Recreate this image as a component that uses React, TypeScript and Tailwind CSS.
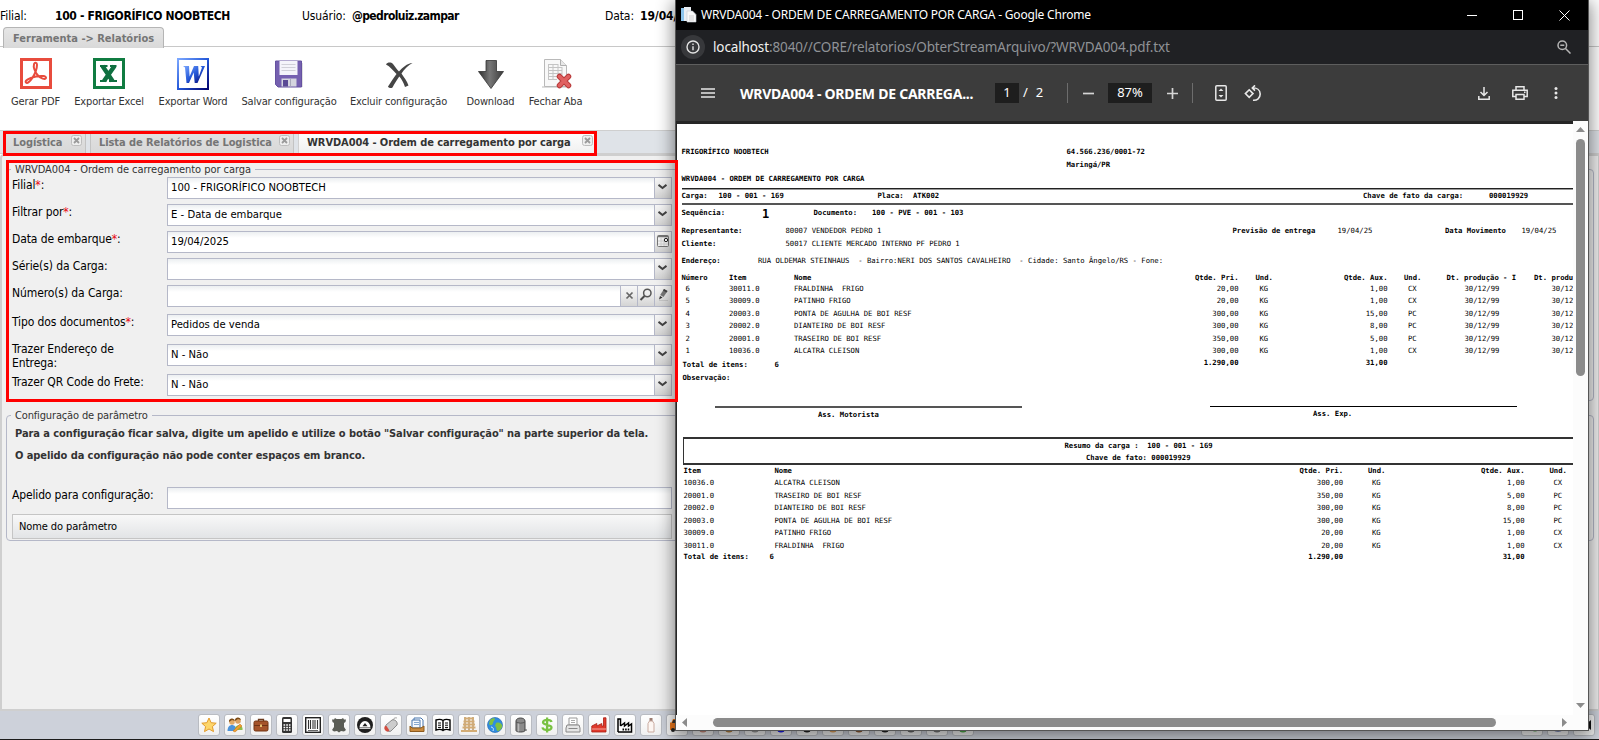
import type { ReactNode } from "react";

const field = "border border-[#b5b8c8] bg-white bg-[linear-gradient(#eceff1,#ffffff_6px)]";

/* ---------- toolbar icons ---------- */

const PdfIcon = () => (
  <svg width="32" height="32" viewBox="0 0 32 32" fill="none">
    <rect x="1.5" y="1.5" width="29" height="28" fill="#fff" stroke="#e84c3d" strokeWidth="3" />
    <path d="M6 24.5c-2-2 3.500-4.600 10-6 5.500-1.200 10.500-.6 10 1.600-.6 2.100-5.500.3-8.500-3.100-2.600-3-4.400-8-3.500-10.800.7-2 3-1.800 3 .6 0 4-2.400 9.800-5 13.700-2.200 3.300-4.700 5.200-6 4z" stroke="#e84c3d" strokeWidth="2" />
  </svg>
);

const ExcelIcon = () => (
  <svg width="32" height="32" viewBox="0 0 32 32">
    <rect x="1.500" y="1.500" width="29" height="28" fill="#fff" stroke="#107c41" strokeWidth="3" />
    <path d="M9.500 8l10 15M21.500 8L11 23" stroke="#0f7040" strokeWidth="4.400" />
    <path d="M7 8h7.500M17 8h6.500M7 23h6.500M16 23h8" stroke="#0f7040" strokeWidth="2" />
  </svg>
);

const WordIcon = () => (
  <svg width="32" height="33" viewBox="0 0 32 33">
    <defs>
      <linearGradient id="wg" x1="0" y1="0" x2="1" y2="1">
        <stop offset="0" stopColor="#7ba7ff" />
        <stop offset=".5" stopColor="#2458d8" />
        <stop offset="1" stopColor="#02036e" />
      </linearGradient>
    </defs>
    <rect x="1" y="1" width="30" height="30" fill="#fff" stroke="url(#wg)" strokeWidth="2" />
    <path d="M6 8h6l.6 10.500L17 8h4.200l.6 10.500L25 9.500 23.500 8H28l-7.500 17h-2.800l-1-10.500L12 25H9.500L8 9.500z" fill="url(#wg)" />
  </svg>
);

const FloppyIcon = () => (
  <svg width="30" height="32" viewBox="0 0 30 32">
    <path d="M3 5h26v24H3z" fill="#000" opacity=".12" />
    <path d="M1.500 3h26v26H4l-2.500-2.500z" fill="#7560b0" stroke="#6552a0" />
    <path d="M5.500 3h18v14h-18z" fill="#f4f4fa" />
    <path d="M7.500 6.500h14M7.500 9.500h14M7.500 12.500h14" stroke="#d0d0d8" />
    <path d="M7.500 20.500h15v8h-15z" fill="#d5d5df" />
    <path d="M9 22h5v6.500H9z" fill="#5b4a95" />
    <path d="M16 21h1v7.500h-1z" fill="#a9a9bb" />
  </svg>
);

const DeleteIcon = () => (
  <svg width="30" height="32" viewBox="0 0 30 32">
    <path d="M2 6.500c1.500-2.500 5-2.500 7-.5 2.500 3 4 5.500 6 7.500 3.500-4 8-8 13.500-8.500-4.500 2.500-8 6-11 10.500 2.500 4 5.500 7.500 7 12l-3.500 1.500c-1.500-4.500-3.500-8-5.700-10.500-3 4-4.800 7.500-6.800 11-1.500 1-4 .5-4.500-1 3-4.500 5.500-8.500 8.500-12.500C9 12.500 6 8.500 2 6.500z" fill="#454545" />
  </svg>
);

const DownIcon = () => (
  <svg width="28" height="32" viewBox="0 0 28 32">
    <defs>
      <linearGradient id="dg" x1="0" y1="0" x2="1" y2="0">
        <stop offset="0" stopColor="#2e2e2e" />
        <stop offset=".45" stopColor="#777" />
        <stop offset="1" stopColor="#3a3a3a" />
      </linearGradient>
    </defs>
    <path d="M9 2.500h10.500v11h7L14 30.500 1.500 13.500H9z" fill="url(#dg)" stroke="#333" strokeWidth=".8" />
  </svg>
);

const CloseSheetIcon = () => (
  <svg width="32" height="32" viewBox="0 0 32 32">
    <path d="M2 29h24" stroke="#ddd" strokeWidth="2" />
    <path d="M4.500 1.500h16l6 6v21h-22z" fill="#f8f8f8" stroke="#b9b9b9" />
    <path d="M20.500 1.500v6h6" fill="#e8e8e8" stroke="#b0b0b0" />
    <path d="M8 6.500h10M8 9.500h14M8 12.500h14M8 15.500h14M8 18.500h10M8 21.500h9M8.500 6v16M13 6v16M18 6v12M22 9v8" stroke="#c4c4c4" />
    <path d="M19.500 18.500l9 9M28.500 18.500l-9 9" stroke="#b93a3a" strokeWidth="5.500" strokeLinecap="round" />
    <path d="M19.500 18.500l9 9M28.500 18.500l-9 9" stroke="#e06060" strokeWidth="3.500" strokeLinecap="round" />
  </svg>
);

const tools = [
  { label: "Gerar PDF", w: "w-[63px]", icon: <PdfIcon /> },
  { label: "Exportar Excel", w: "w-[84px]", icon: <ExcelIcon /> },
  { label: "Exportar Word", w: "w-[84px]", icon: <WordIcon /> },
  { label: "Salvar configuração", w: "w-[108px]", icon: <FloppyIcon /> },
  { label: "Excluir configuração", w: "w-[111px]", icon: <DeleteIcon /> },
  { label: "Download", w: "w-[73px]", icon: <DownIcon /> },
  { label: "Fechar Aba", w: "w-[57px]", icon: <CloseSheetIcon /> },
];

/* ---------- tabs ---------- */

const TabClose = () => (
  <svg width="11" height="11" viewBox="0 0 11 11" className="mt-[4px] shrink-0">
    <rect x=".5" y=".5" width="10" height="10" rx="2" fill="#eee" stroke="#bdbdbd" />
    <path d="M3 3l5 5M8 3L3 8" stroke="#9a9a9a" strokeWidth="1.800" />
  </svg>
);

const Tab = ({ label, active, className }: { label: string; active?: boolean; className: string }) => (
  <div
    className={`flex h-[23px] justify-between rounded-t-[3px] border border-b-0 pr-[3px] pl-[8px] text-[11px] font-bold leading-[24px] tracking-[-0.08px] whitespace-nowrap ${
      active ? "border-[#d0d0d0] bg-[linear-gradient(#ffffff,#f0f0f0)] text-[#333]" : "border-[#c3c3c3] bg-[linear-gradient(#e2e2e2,#d8d8d8)] text-[#757575]"
    } ${className}`}
  >
    <span>{label}</span>
    <TabClose />
  </div>
);

/* ---------- form ---------- */

const Trigger = ({ children }: { children: ReactNode }) => (
  <div className="flex h-full w-[17px] shrink-0 items-center justify-center border-l border-[#b5b8c8] bg-[linear-gradient(#f7f7f7,#e9e9e9_50%,#d4d4d4)]">{children}</div>
);

const Chevron = () => (
  <svg width="9" height="6" viewBox="0 0 9 6" className="mr-px mb-[2px]">
    <path d="M.5 .8l4 3.200L8.500 .8" fill="none" stroke="#444" strokeWidth="2" />
  </svg>
);

const CalendarIcon = () => (
  <svg width="12" height="12" viewBox="0 0 12 12" className="mb-[2px]">
    <rect x=".5" y=".5" width="11" height="11" rx="1" fill="#f5f5f5" stroke="#777" />
    <path d="M1 1.500h10" stroke="#777" strokeWidth="1.500" />
    <path d="M4 3v8M7 6v5M1 6h6M1 9h10" stroke="#ccc" strokeWidth=".8" />
    <circle cx="9" cy="5" r="1.700" fill="#fff" stroke="#222" />
  </svg>
);

const ClearIcon = () => (
  <svg width="9" height="9" viewBox="0 0 9 9" className="mb-[2px]">
    <path d="M1.500 1.500l6 6M7.500 1.500l-6 6" stroke="#666" strokeWidth="1.700" />
  </svg>
);

const SearchIcon = () => (
  <svg width="14" height="14" viewBox="0 0 14 14" className="mb-[2px]">
    <circle cx="8.300" cy="5" r="3.700" fill="none" stroke="#555" strokeWidth="1.500" />
    <path d="M5.500 8L1.500 12" stroke="#4a4a4a" strokeWidth="2" />
  </svg>
);

const PencilIcon = () => (
  <svg width="14" height="14" viewBox="0 0 14 14" className="mb-[2px]">
    <path d="M8 1l3.500 2-4 6-3.300-2z" fill="#777" />
    <path d="M8 1l3.500 2-1 1.500L7 2.500z" fill="#444" />
    <path d="M4 8l2.500 1.500L3 11.500z" fill="#333" />
    <path d="M3 12.500h9" stroke="#c8c8c8" />
  </svg>
);

type FormRow = { label: string; req?: boolean; value?: string; h: string; lift?: boolean; icons?: ReactNode[] };
const rows: FormRow[] = [
  { label: "Filial", req: true, value: "100 - FRIGORÍFICO NOOBTECH", h: "h-[27px]" },
  { label: "Filtrar por", req: true, value: "E - Data de embarque", h: "h-[27px]" },
  { label: "Data de embarque", req: true, value: "19/04/2025", h: "h-[27px]", icons: [<CalendarIcon />] },
  { label: "Série(s) da Carga", h: "h-[27px]" },
  { label: "Número(s) da Carga", h: "h-[29px]", icons: [<ClearIcon />, <SearchIcon />, <PencilIcon />] },
  { label: "Tipo dos documentos", req: true, value: "Pedidos de venda", h: "h-[30px]" },
  { label: "Trazer Endereço de Entrega", value: "N - Não", h: "h-[30px]", lift: true },
  { label: "Trazer QR Code do Frete", value: "N - Não", h: "h-[27px]" },
];

/* ---------- taskbar ---------- */

const dockIcons: ReactNode[] = [
  <path d="M8 1l2.100 4.700 5.100.5-3.800 3.400 1.100 5L8 12l-4.500 2.600 1.100-5L.8 6.200l5.100-.5z" fill="#fdd66b" stroke="#e29a2b" />,
  <><circle cx="5" cy="5" r="2.800" fill="#e2ab69" /><circle cx="11" cy="4" r="2.800" fill="#d9a062" /><path d="M2 5a3 3 0 016-1L5 3zM8 4a3 3 0 016-1l-3-1z" fill="#7b4a16" /><path d="M.5 14c0-4 2-6 4.500-6s4.500 2 4.500 6z" fill="#4d93d9" /><path d="M8 11c1-3 6-5 7.500 0v2H9z" fill="#8bbf4d" /><path d="M6 14l7-7 2 2-7 6z" fill="#f0a030" stroke="#c46f10" strokeWidth=".5" /></>,
  <><path d="M5.500 4V2.500h5V4" fill="none" stroke="#6b3a1c" strokeWidth="1.300" /><rect x="1" y="4" width="14" height="10" rx="1.500" fill="#a4532a" stroke="#733413" /><path d="M1 8.500h14" stroke="#6e3315" /><rect x="7" y="7.500" width="2" height="2.500" fill="#e6c070" /></>,
  <><rect x="3" y="0" width="10" height="16" rx="1.500" fill="#333" /><rect x="4.500" y="2" width="7" height="3" fill="#fff" /><path d="M4.500 8h7M4.500 10.500h7M4.500 13h7" stroke="#fff" strokeWidth="1.500" strokeDasharray="1.700 1" /></>,
  <><rect x=".7" y=".7" width="14.600" height="14.600" fill="#fff" stroke="#222" strokeWidth="1.400" /><path d="M3.500 3v9M5.500 3v9M8 3v9M10 3v9M12.500 3v9" stroke="#333" strokeWidth="1.100" /><path d="M3 13.500h10" stroke="#666" /></>,
  <path d="M4 1l1.500 1h5L12 1l1 1.500h2L14.500 5 13 6v4l2 3-2 1.500-3-.5-2 1.500L6 14l-3 .5L1 13l2-3V6L1.500 5 1 2.500h2z" fill="#5a5c55" />,
  <><circle cx="8" cy="8" r="8" fill="#1f1f1f" /><path d="M2.500 10.500a5.500 6.500 0 0111 0z" fill="#fff" /><path d="M5.500 9.300L8 6l2.500 3.300z" fill="#1f1f1f" /><path d="M2.500 11.500h11" stroke="#fff" strokeWidth=".8" /></>,
  <><path d="M10 3c1-3 4-2 4-2" fill="none" stroke="#999" /><path d="M3 8l6-5c3-1 6 2 5 5l-6 6c-3 2-7-2-5-6z" fill="#ccc" stroke="#8a8a8a" /><path d="M2 9c-2 3 1 6 3 5.500l1.500-1L3.500 9z" fill="#d34d3f" /></>,
  <><path d="M5 1h7l2 2v8H5z" fill="#fff" stroke="#4675ad" /><path d="M3 3h8v8H3z" fill="#f5f9ff" stroke="#4675ad" /><path d="M5 5.500h5M5 7.500h5" stroke="#86a8d0" /><path d="M1 9l2 2h9l3-2v5.500H1z" fill="#c98a3e" stroke="#8d5a1d" /></>,
  <><path d="M1 3c3-1 5-1 7 .5C10 2 12 2 15 3v10c-3-1-5-1-7 .5C6 12 4 12 1 13zM8 3.500v10" fill="#fff" stroke="#000" strokeWidth="1.400" /><path d="M3 6h3M3 8.200h3M3 10.400h3M10 6h3M10 8.200h3M10 10.400h3" stroke="#000" /></>,
  <><path d="M4 0v14M8 0v14M12 0v14" stroke="#a77f48" strokeWidth="1.200" /><path d="M3 1.500h10M2.500 4.500h11M2 7.500h12M1.500 10.500h13M0 14h16" stroke="#d3ac74" strokeWidth="1.900" /></>,
  <><circle cx="8" cy="8" r="7.500" fill="#2f8de0" stroke="#2b6db0" strokeWidth=".7" /><path d="M3 3c2-2 5-2 5-1s-2 2-2 4-3 3-4 1zM9 6c3-1 5 0 6 2s-2 6-4 6-1-4-3-5z" fill="#7fc142" /><path d="M4 10c2 0 3 2 2 4" stroke="#d6ecfb" fill="none" /></>,
  <><path d="M3 4c0-4 9-4 9 0v9.500c0 2-9 2-9 0z" fill="#8b8b8b" stroke="#444" /><path d="M3 5c2 1.500 7 1.500 9 0" fill="none" stroke="#555" /><path d="M5.500 6.500v8" stroke="#b9b9b9" strokeWidth="1.500" /><path d="M11 13h3" stroke="#555" /></>,
  <path d="M12.500 5C12 2.500 4 2 4 5.200c0 3.600 8.500 1.600 8.500 5.400 0 3.400-8.500 3.200-9-.2M8.100 .5v15" fill="none" stroke="#79c143" strokeWidth="2.300" />,
  <><path d="M4 1h8v7H4z" fill="#fff" stroke="#999" /><path d="M6 3.500h4M6 5.500h4" stroke="#aaa" /><path d="M2 8h12l1 3v4H1v-4z" fill="#e5e5e5" stroke="#888" /><path d="M3.500 11.500h9" stroke="#888" /></>,
  <><path d="M.8 15V9l5-2.500V9l5-2.500V9h1.700V.8H15V15z" fill="#e03a2c" stroke="#a81d13" strokeWidth=".8" /><path d="M1 12h14" stroke="#f5a79f" strokeWidth="1" /></>,
  <><path d="M1 15V2h2.500v7M3.500 9l4-3v3l4-3v3l3-2v8H1" fill="#fff" stroke="#000" strokeWidth="1.500" /><path d="M5.500 12.500h7" stroke="#000" strokeDasharray="1.600 1" strokeWidth="1.800" /></>,
  <><path d="M6.500 1h3v3h-3z" fill="#9b7d72" /><path d="M6.500 4L5 6.500V15h6V6.500L9.500 4z" fill="#fdf6f2" stroke="#c9aba0" /></>,
  <><path d="M1 5.500h1.500L4 2h5v11H1z" fill="#f07a1d" /><path d="M3 6l1.300-3H7v3z" fill="#333" /><circle cx="4" cy="13" r="2" fill="#222" /></>,
];

const lowDock = ["#c98b7a", "#b5813f", "#999", "#1a1aee", "#222", "#e4a35a", "#8d5a33", "#222", "#666", "#777", "#4fae4a"];

const DockButton = ({ children }: { children?: ReactNode }) => (
  <div className="flex h-[22px] w-[22px] shrink-0 items-center justify-center rounded-[3px] border border-[#b9bcc2] bg-[linear-gradient(#ffffff,#f0f0f0)]">
    <svg width="16" height="16" viewBox="0 0 16 16">{children}</svg>
  </div>
);

/* ---------- report ---------- */

const infoGrid = "grid whitespace-pre leading-[12px]";
const itemsGrid = "grid grid-cols-[47.500px_65px_350px_94.500px_17px_132px_16.500px_42.500px_87.500px_60px] whitespace-pre";
const sumGrid = "grid grid-cols-[91px_478px_90.500px_25px_156.500px_25px_60px] whitespace-pre";

const items = [
  ["6", "30011.0", "FRALDINHA  FRIGO", "20,00", "1,00", "CX"],
  ["5", "30009.0", "PATINHO FRIGO", "20,00", "1,00", "CX"],
  ["4", "20003.0", "PONTA DE AGULHA DE BOI RESF", "300,00", "15,00", "PC"],
  ["3", "20002.0", "DIANTEIRO DE BOI RESF", "300,00", "8,00", "PC"],
  ["2", "20001.0", "TRASEIRO DE BOI RESF", "350,00", "5,00", "PC"],
  ["1", "10036.0", "ALCATRA CLEISON", "300,00", "1,00", "CX"],
];
const summary = [items[5], items[4], items[3], items[2], items[1], items[0]];

const Report = () => (
  <div className="h-[591px] w-[896px] overflow-hidden bg-white pt-[21.600px] pl-[4.500px] font-['DejaVu_Sans_Mono',monospace] text-[7.240px] text-black">
    <div className={`${infoGrid} grid-cols-[385px_1fr] font-bold`}>
      <span>FRIGORÍFICO NOOBTECH</span>
      <span>64.566.236/0001-72</span>
    </div>
    <div className="mt-[1px] pl-[385px] leading-[12px] font-bold">Maringá/PR</div>
    <div className="mt-[2.900px] leading-[12px] font-bold">WRVDA004 - ORDEM DE CARREGAMENTO POR CARGA</div>
    <div className="mt-[2.500px] h-[2px] border-t border-b border-t-[#222] border-b-[#999]" />
    <div className={`${infoGrid} grid-cols-[37px_159px_35.500px_450px_126px_1fr] font-bold`}>
      <span>Carga:</span><span>100 - 001 - 169</span><span>Placa:</span><span>ATK002</span><span>Chave de fato da carga:</span><span>000019929</span>
    </div>
    <div className="mt-px h-[2px] bg-[#555]" />
    <div className={`${infoGrid} mt-[2px] grid-cols-[80.500px_51.500px_58.500px_1fr] font-bold`}>
      <span>Sequência:</span><span className="text-[12px] leading-[15px]">1</span><span>Documento:</span><span>100 - PVE - 001 - 103</span>
    </div>
    <div className={`${infoGrid} mt-[3px] grid-cols-[104px_447px_105px_107.500px_76.500px_1fr]`}>
      <b>Representante:</b><span>80007 VENDEDOR PEDRO 1</span><b>Previsão de entrega</b><span>19/04/25</span><b>Data Movimento</b><span>19/04/25</span>
    </div>
    <div className={`${infoGrid} mt-px grid-cols-[104px_1fr]`}>
      <b>Cliente:</b><span>50017 CLIENTE MERCADO INTERNO PF PEDRO 1</span>
    </div>
    <div className={`${infoGrid} mt-[5px] grid-cols-[76.500px_1fr]`}>
      <b>Endereço:</b><span>RUA OLDEMAR STEINHAUS  - Bairro:NERI DOS SANTOS CAVALHEIRO  - Cidade: Santo Ângelo/RS - Fone:</span>
    </div>
    <div className={`${itemsGrid} mt-[5px] leading-[12px] font-bold`}>
      <span>Número</span><span>Item</span><span>Nome</span><span className="text-right">Qtde. Pri.</span><span />
      <span className="flex justify-between"><span>Und.</span><span>Qtde. Aux.</span></span><span /><span>Und.</span><span>Dt. produção - I</span><span>Dt. produção - F</span>
    </div>
    <div className="-mt-px">
      {items.map((r) => (
        <div key={r[1]} className={`${itemsGrid} h-[12.400px] leading-[12.400px]`}>
          <span className="pl-[4px]">{r[0]}</span><span>{r[1]}</span><span>{r[2]}</span><span className="text-right">{r[3]}</span><span />
          <span className="flex justify-between pl-[4px]"><span>KG</span><span>{r[4]}</span></span><span />
          <span className="pl-[4px]">{r[5]}</span><span className="pl-[18px]">30/12/99</span><span className="pl-[17.500px]">30/12/99</span>
        </div>
      ))}
    </div>
    <div className={`${itemsGrid} h-[13px] leading-[12px] font-bold`}>
      <span className="pt-[2px] pl-px">Total de itens:</span><span className="pt-[2px] pl-[45.500px]">6</span><span /><span className="text-right">1.290,00</span><span /><span className="text-right">31,00</span>
    </div>
    <div className="mt-[2px] pl-px leading-[12px] font-bold">Observação:</div>
    <div className="mt-[22px] flex pl-[33.500px] leading-[14px] font-bold">
      <div className="w-[307px] border-t-2 border-[#555] pl-[103px]">Ass. Motorista</div>
      <div className="ml-[188px] w-[307px] border-t border-[#000] pl-[103px]">Ass. Exp.</div>
    </div>
    <div className="mt-[15px] ml-[1px] h-[28px] border-y-2 border-l border-[#333] pt-px leading-[12px] font-bold">
      <div className="pl-[381px] whitespace-pre">Resumo da carga :  100 - 001 - 169</div>
      <div className="pl-[402.500px]">Chave de fato: 000019929</div>
    </div>
    <div className={`${sumGrid} ml-[2px] leading-[12px] font-bold`}>
      <span>Item</span><span>Nome</span><span className="text-right">Qtde. Pri.</span><span /><span className="flex justify-between"><span>Und.</span><span>Qtde. Aux.</span></span><span /><span>Und.</span>
    </div>
    <div className="ml-[2px]">
      {summary.map((r) => (
        <div key={r[1]} className={`${sumGrid} h-[12.500px] leading-[12.500px]`}>
          <span>{r[1]}</span><span>{r[2]}</span><span className="text-right">{r[3]}</span><span />
          <span className="flex justify-between pl-[4px]"><span>KG</span><span>{r[4]}</span></span><span /><span className="pl-[4px]">{r[5]}</span>
        </div>
      ))}
    </div>
    <div className={`${sumGrid} -mt-px ml-[2px] leading-[11px] font-bold`}>
      <span>Total de itens:</span><span className="-ml-[5px]">6</span><span className="text-right">1.290,00</span><span /><span className="text-right">31,00</span>
    </div>
  </div>
);

/* ---------- PDF window ---------- */

const PdfWindow = () => (
  <div className="absolute top-0 left-[675px] flex h-[731px] w-[914px] flex-col border border-t-0 border-[#555] bg-[#fcfcfc] font-['Noto_Sans',sans-serif] shadow-[0_4px_16px_2px_rgba(0,0,0,0.45)]">
    <div className="flex h-[30px] shrink-0 items-center bg-black pr-[18px] pl-[5px] text-white">
      <svg width="16" height="16" viewBox="0 0 16 16" className="shrink-0">
        <path d="M0 1h5v13H0z" fill="#8cc4ec" />
        <path d="M3 0h7v14H3z" fill="#e8edf2" />
        <path d="M6 4h5.500L15 7.500V15H6z" fill="#f8f8f8" stroke="#c5cbd1" strokeWidth=".6" />
        <path d="M8 9h5M8 11h5M8 13h5" stroke="#bbb" strokeWidth=".7" />
      </svg>
      <span className="ml-[4px] grow text-[12px] tracking-[-0.200px] whitespace-nowrap">WRVDA004 - ORDEM DE CARREGAMENTO POR CARGA - Google Chrome</span>
      <svg width="103" height="11" viewBox="0 0 103 11" fill="none" stroke="#fff" className="shrink-0">
        <path d="M0 5.500h10M92.500 .5l10 10M102.500 .5l-10 10" />
        <rect x="46.500" y=".5" width="9" height="9" />
      </svg>
    </div>
    <div className="flex h-[34px] shrink-0 items-center bg-[#202124] pr-[17px] pl-[5px]">
      <div className="flex h-[24px] w-[24px] items-center justify-center rounded-full bg-[#37383b]">
        <svg width="14" height="14" viewBox="0 0 14 14" fill="none" stroke="#e3e3e3" strokeWidth="1.400">
          <circle cx="7" cy="7" r="6" />
          <path d="M7 6.300v4M7 3.500v1.500" />
        </svg>
      </div>
      <span className="ml-[8px] grow text-[13.500px] leading-[18px] tracking-[-0.120px] whitespace-nowrap text-[#8f9296]"><span className="text-[#f1f1f1]">localhost</span>:8040//CORE/relatorios/ObterStreamArquivo/?WRVDA004.pdf.txt</span>
      <svg width="14" height="14" viewBox="0 0 14 14" fill="none" stroke="#b5b5b5" strokeWidth="1.500">
        <circle cx="5.300" cy="5.300" r="4.300" />
        <path d="M8.500 8.500l5 5M3.300 5.300h4" />
      </svg>
    </div>
    <div className="flex h-[57px] shrink-0 items-center border-t border-[#5e5e5e] bg-[#3c3c3c] pr-[30px] pl-[25px] whitespace-nowrap text-white">
      <svg width="14" height="10" viewBox="0 0 14 10" stroke="#e6e6e6" strokeWidth="1.600"><path d="M0 1h14M0 5h14M0 9h14" /></svg>
      <span className="ml-[25px] w-[240px] text-[14px] font-bold tracking-[-0.250px]">WRVDA004 - ORDEM DE CARREGA...</span>
      <span className="ml-[15px] flex h-[20px] w-[24px] items-center justify-center bg-[#1e1e1e] text-[13px]">1</span>
      <span className="ml-[4px] flex w-[44px] gap-[8px] text-[13px]"><span>/</span><span>2</span></span>
      <span className="h-[20px] w-px bg-[#6d6d6d]" />
      <svg className="ml-[15px]" width="11" height="11" viewBox="0 0 11 11" stroke="#d5d5d5" strokeWidth="1.700"><path d="M0 5.500h11" /></svg>
      <span className="ml-[14px] flex h-[20px] w-[44px] items-center justify-center bg-[#1e1e1e] text-[13px]">87%</span>
      <svg className="ml-[15px]" width="11" height="11" viewBox="0 0 11 11" stroke="#d5d5d5" strokeWidth="1.700"><path d="M0 5.500h11M5.500 0v11" /></svg>
      <span className="ml-[14px] h-[20px] w-px bg-[#6d6d6d]" />
      <svg className="ml-[22px]" width="12" height="16" viewBox="0 0 12 16" fill="none" stroke="#e8e8e8" strokeWidth="1.500">
        <rect x=".8" y=".8" width="10.400" height="14.400" rx="1" />
        <path d="M3.500 6L6 3.500 8.500 6zM3.500 10L6 12.500 8.500 10z" fill="#e8e8e8" stroke="none" />
      </svg>
      <svg className="ml-[17px]" width="18" height="17" viewBox="0 0 18 17" fill="none" stroke="#e8e8e8" strokeWidth="1.600">
        <path d="M5.200 4.800L9 8.600 5.200 12.400 1.400 8.600z" />
        <path d="M8.500 2.800c4 0 7.700 2 7.700 6.200 0 4-3.200 6.700-7.200 6.200M11 .3L8.300 2.900 11 5.600" />
      </svg>
      <span className="grow" />
      <svg width="12" height="13" viewBox="0 0 12 13" fill="none" stroke="#e8e8e8" strokeWidth="1.500"><path d="M6 0v8M2.500 5L6 8.500 9.500 5M.8 9v3.200h10.400V9" /></svg>
      <svg className="ml-[22px]" width="16" height="14" viewBox="0 0 16 14" fill="none" stroke="#e8e8e8" strokeWidth="1.500">
        <path d="M4 4V.8h8V4M4 10.500H.8V4.300h14.400v6.200H12" />
        <path d="M4 8.500h8v4.700H4z" />
        <path d="M12 6.300h1.500" />
      </svg>
      <svg className="ml-[26px]" width="4" height="12" viewBox="0 0 4 12" fill="#e8e8e8"><circle cx="2" cy="1.500" r="1.500" /><circle cx="2" cy="6" r="1.500" /><circle cx="2" cy="10.500" r="1.500" /></svg>
    </div>
    <div className="flex h-[594px] shrink-0">
      <div className="w-[897px] border-t-[3px] border-l border-[#262626]"><Report /></div>
      <div className="flex w-[15px] flex-col items-center bg-[#fcfcfc] pt-[6px]">
        <svg width="9" height="5" viewBox="0 0 9 5"><path d="M0 5l4.500-5L9 5z" fill="#8b8b8b" /></svg>
        <div className="mt-[7px] h-[237px] w-[9px] rounded-full bg-[#8b8b8b]" />
        <svg className="mt-auto mb-[7px]" width="9" height="5" viewBox="0 0 9 5"><path d="M0 0l4.500 5L9 0z" fill="#8b8b8b" /></svg>
      </div>
    </div>
    <div className="flex grow items-center bg-[#fcfcfc] pr-[21px] pl-[6px]">
      <svg width="5" height="9" viewBox="0 0 5 9"><path d="M5 0L0 4.500 5 9z" fill="#8b8b8b" /></svg>
      <div className="ml-[26px] h-[9px] w-[783px] rounded-full bg-[#8b8b8b]" />
      <svg className="ml-auto" width="5" height="9" viewBox="0 0 5 9"><path d="M0 0l5 4.500L0 9z" fill="#8b8b8b" /></svg>
    </div>
  </div>
);

/* ---------- page ---------- */

export default function App() {
  return (
    <div className="relative flex h-[740px] w-[1599px] flex-col overflow-hidden bg-white font-['DejaVu_Sans_Condensed','DejaVu_Sans',sans-serif] text-[12px] text-black [font-stretch:condensed]">
      <div className="flex h-[27px] shrink-0 pt-[8px] leading-[16px] tracking-[-0.100px] whitespace-nowrap">
        <span className="w-[55px]">Filial:</span>
        <b className="w-[247px] tracking-[-0.350px]">100 - FRIGORÍFICO NOOBTECH</b>
        <span className="w-[50px]">Usuário:</span>
        <b className="w-[253px] tracking-[-0.600px]">@pedroluiz.zampar</b>
        <span className="w-[35px]">Data:</span>
        <b>19/04/2025</b>
      </div>
      <div className="flex h-[20px] shrink-0 border-b border-[#c8c8c8] pl-[3px]">
        <div className="h-[21px] w-[161px] rounded-t-[4px] border border-b-0 border-[#b5b5b5] bg-[linear-gradient(#e6e6e6,#d9d9d9)] pl-[9px] text-[11px] leading-[21px] font-bold whitespace-nowrap text-[#757575]">Ferramenta -&gt; Relatórios</div>
      </div>
      <div className="flex h-[83px] shrink-0 pt-[11px] pl-[4px] text-[#333]">
        {tools.map((t) => (
          <div key={t.label} className={`flex shrink-0 flex-col items-center ${t.w}`}>
            <div className="flex h-[35px] items-start">{t.icon}</div>
            <span className="text-[11px] leading-[18px] tracking-[-0.170px] whitespace-nowrap">{t.label}</span>
          </div>
        ))}
      </div>
      <div className="flex h-[24px] shrink-0 items-end border-t border-b border-[#cfcfcf] bg-[#dfe3e8] pl-[4px]">
        <Tab label="Logística" className="w-[82px]" />
        <Tab label="Lista de Relatórios de Logistica" className="ml-[4px] w-[204px]" />
        <Tab label="WRVDA004 - Ordem de carregamento por carga" active className="ml-[4px] w-[299px]" />
      </div>
      <div className="flex h-[555px] shrink-0 flex-col rounded-tl-[4px] border-t-2 border-r border-l-2 border-[#cfcfcf] bg-[#f0f0f0] pr-[4px] pl-[4px]">
        <div className="mt-[13px] h-[232px] rounded-[4px] border border-[#b5b8c8] pl-[5px]">
          <div className="-mt-[9px] -ml-px flex h-[16px]">
            <span className="bg-[#f0f0f0] px-[4px] text-[11px] leading-[17px] tracking-[-0.050px] whitespace-nowrap text-[#333]">WRVDA004 - Ordem de carregamento por carga</span>
          </div>
          {rows.map((r) => (
            <div key={r.label} className={`flex ${r.h}`}>
              <div className={`w-[155px] pr-[8px] leading-[14px] tracking-[-0.100px] ${r.lift ? "-mt-[2px]" : "pt-px"}`}>
                {r.label}{r.req && <span className="text-red-600">*</span>}:
              </div>
              <div className={`flex h-[22px] w-[505px] ${field}`}>
                <span className="grow pl-[3px] text-[11.200px] leading-[20px]">{r.value}</span>
                {r.icons ? r.icons.map((ic, i) => <Trigger key={i}>{ic}</Trigger>) : <Trigger><Chevron /></Trigger>}
              </div>
            </div>
          ))}
        </div>
        <div className="mt-[14px] h-[126px] rounded-[4px] border border-[#b5b8c8] pl-[5px]">
          <div className="-mt-[9px] -ml-px flex h-[17px]">
            <span className="bg-[#f0f0f0] px-[4px] text-[11px] leading-[17px] tracking-[-0.150px] whitespace-nowrap text-[#333]">Configuração de parâmetro</span>
          </div>
          <div className="-mt-px pl-[3px] text-[11px] leading-[22px] font-bold tracking-[-0.080px] whitespace-nowrap text-[#333]">
            <div>Para a configuração ficar salva, digite um apelido e utilize o botão "Salvar configuração" na parte superior da tela.</div>
            <div>O apelido da configuração não pode conter espaços em branco.</div>
          </div>
          <div className="mt-[20px] flex h-[27px]">
            <div className="w-[155px] leading-[16px] tracking-[-0.150px] whitespace-nowrap">Apelido para configuração:</div>
            <div className={`h-[22px] w-[505px] ${field}`} />
          </div>
          <div className="h-[25px] w-[660px] border border-[#c5c5c5] bg-[linear-gradient(#f8f8f8,#e2e4e6)] pl-[6px] text-[11px] leading-[23px] tracking-[-0.100px]">Nome do parâmetro</div>
        </div>
      </div>
      <div className="flex h-[30px] shrink-0 items-center gap-[4px] border-t-2 border-[#cfcfcf] bg-[#cdd1da] pr-[4px] pl-[198px]">
        {dockIcons.map((ic, i) => <DockButton key={i}>{ic}</DockButton>)}
        {lowDock.map((c, i) => <DockButton key={i}><circle cx="8" cy="11" r="4.500" fill={c} /></DockButton>)}
        <span className="grow" />
        <DockButton><path d="M2 14l4-7 4 7z" fill="#e5c93c" /><circle cx="11" cy="11" r="3.500" fill="#45a83c" /></DockButton>
        <DockButton><circle cx="8" cy="8" r="6" fill="#eef" stroke="#7986b5" strokeWidth="2" /></DockButton>
        <DockButton><path d="M15 3v10L9 8z" fill="#111" /></DockButton>
      </div>
      <div className="h-px shrink-0 bg-[#1c1c1c]" />
      <PdfWindow />
      <div className="absolute top-[131px] left-[3px] h-[25px] w-[594px] border-[3px] border-[#ff0000]" />
      <div className="absolute top-[160px] left-[6px] h-[242px] w-[672px] border-[3px] border-[#ff0000]" />
    </div>
  );
}
